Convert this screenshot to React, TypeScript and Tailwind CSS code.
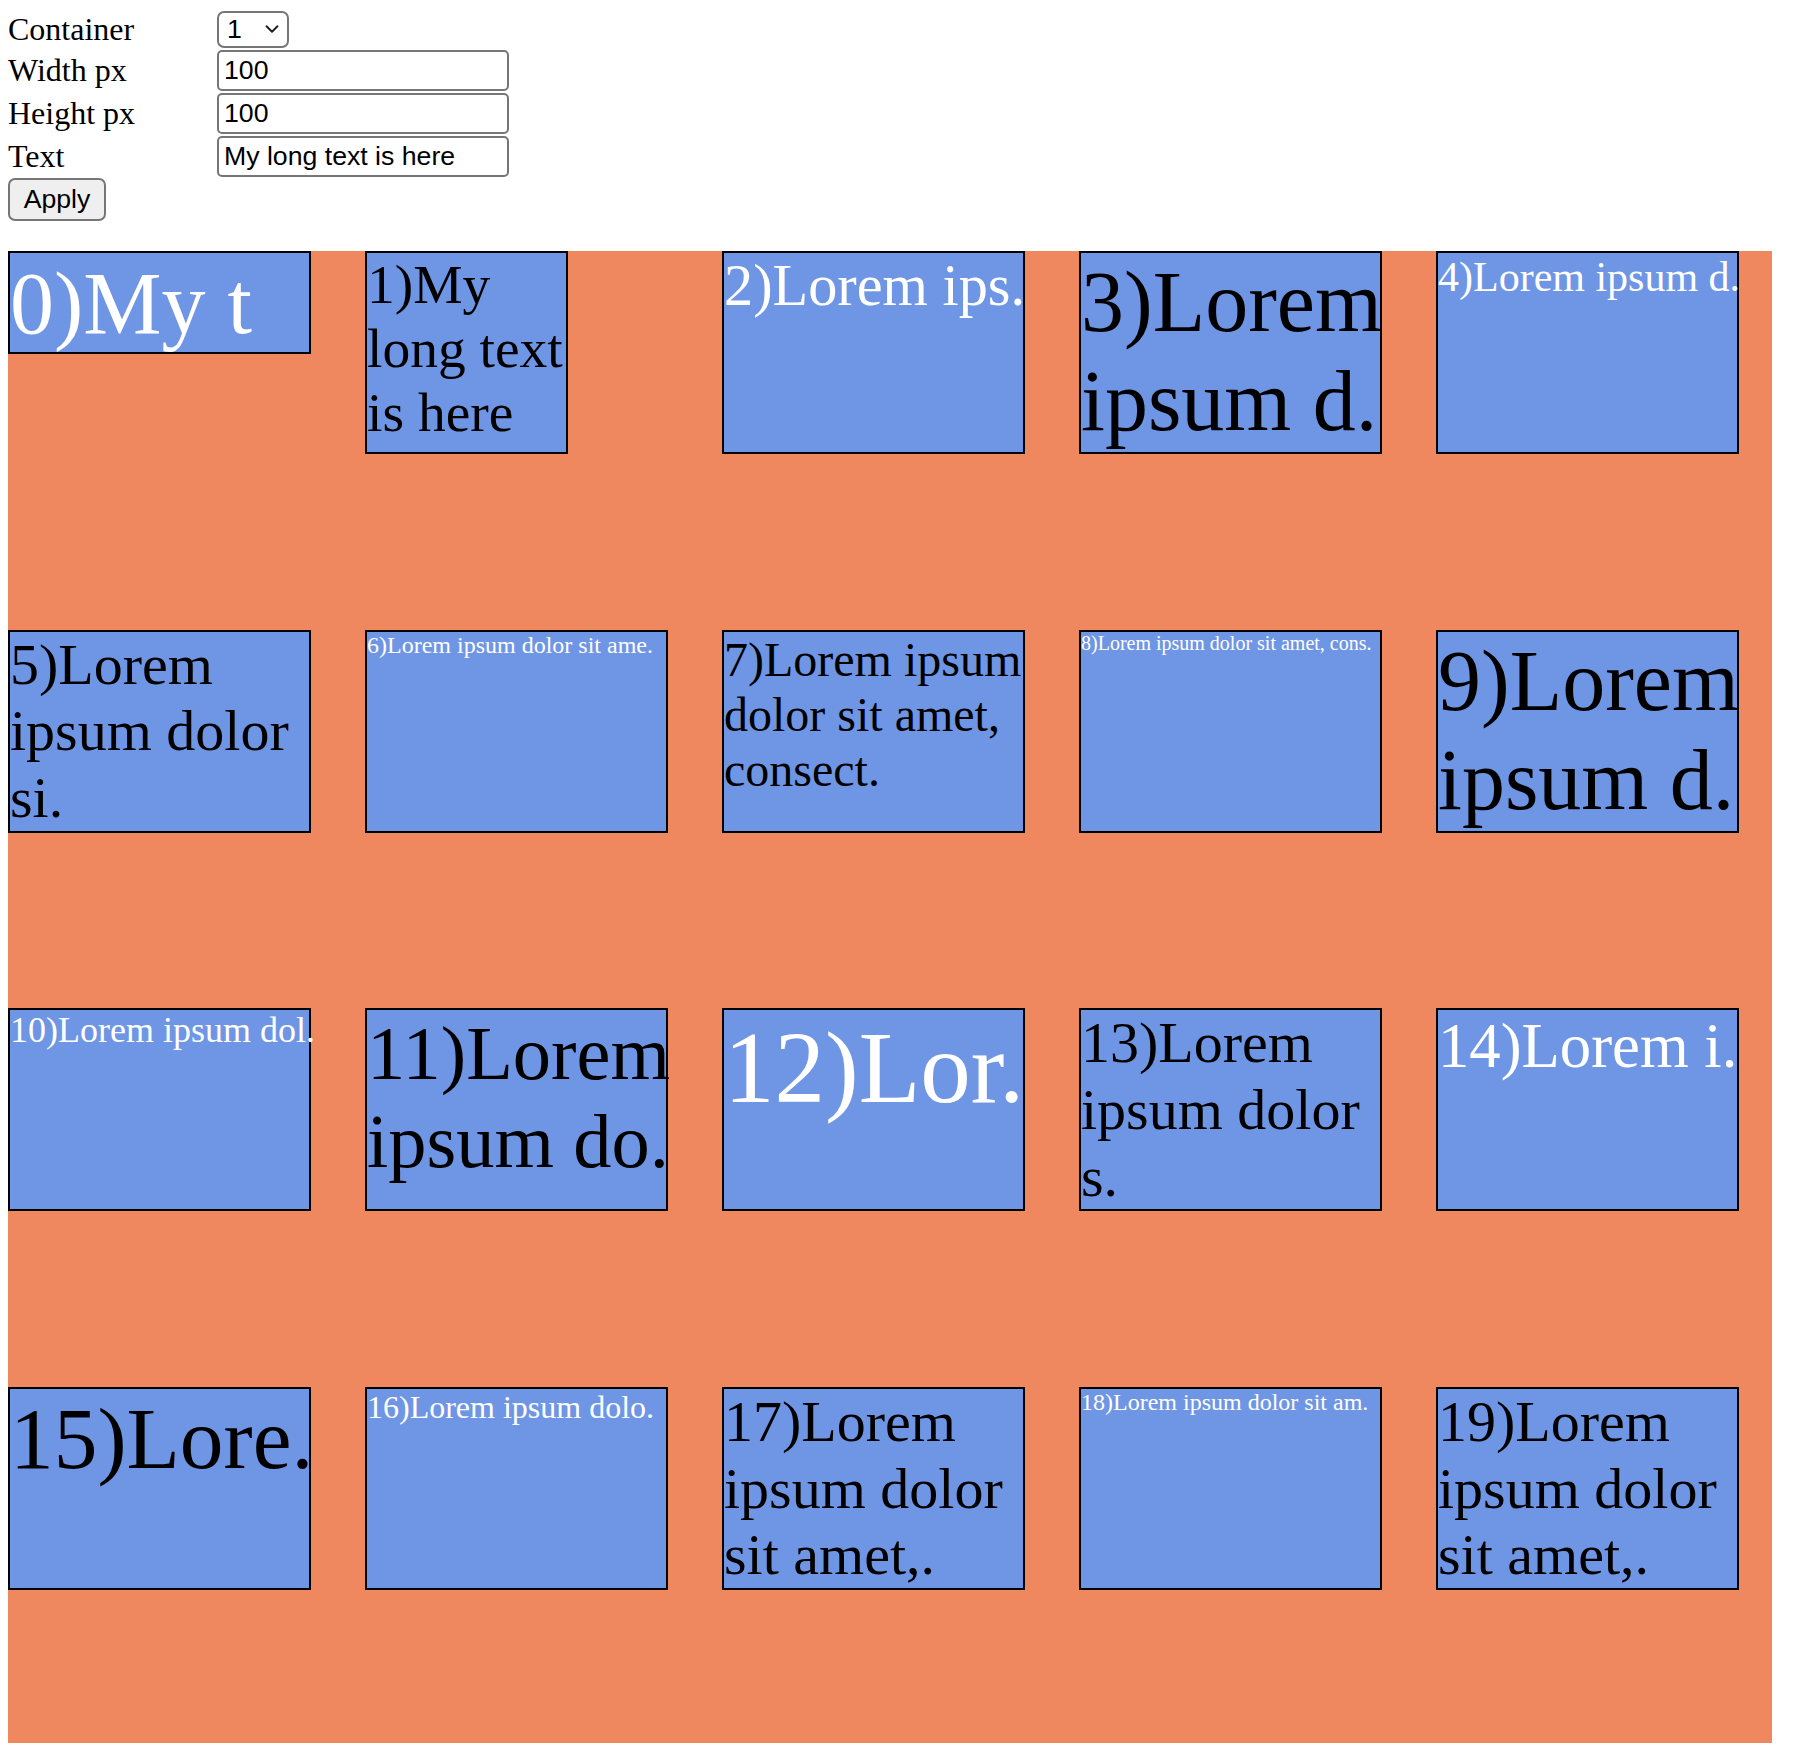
import { ChevronDown } from "lucide-react";

type Cell = {
  lines: string[];
  size: string;
  color: string;
  dims: string;
};

const cells: Cell[] = [
  { lines: ["0)My t"], size: "text-[88px]", color: "text-white", dims: "w-[303px] h-[103px]" },
  { lines: ["1)My", "long text", "is here"], size: "text-[55.5px]", color: "text-black", dims: "w-[203px] h-[203px]" },
  { lines: ["2)Lorem ips."], size: "text-[58.3px]", color: "text-white", dims: "w-[303px] h-[203px]" },
  { lines: ["3)Lorem", "ipsum d."], size: "text-[86px]", color: "text-black", dims: "w-[303px] h-[203px]" },
  { lines: ["4)Lorem ipsum d."], size: "text-[42px]", color: "text-white", dims: "w-[303px] h-[203px]" },
  { lines: ["5)Lorem", "ipsum dolor", "si."], size: "text-[58px]", color: "text-black", dims: "w-[303px] h-[203px]" },
  { lines: ["6)Lorem ipsum dolor sit ame."], size: "text-[24px]", color: "text-white", dims: "w-[303px] h-[203px]" },
  { lines: ["7)Lorem ipsum", "dolor sit amet,", "consect."], size: "text-[48px]", color: "text-black", dims: "w-[303px] h-[203px]" },
  { lines: ["8)Lorem ipsum dolor sit amet, cons."], size: "text-[20px]", color: "text-white", dims: "w-[303px] h-[203px]" },
  { lines: ["9)Lorem", "ipsum d."], size: "text-[86px]", color: "text-black", dims: "w-[303px] h-[203px]" },
  { lines: ["10)Lorem ipsum dol."], size: "text-[36px]", color: "text-white", dims: "w-[303px] h-[203px]" },
  { lines: ["11)Lorem", "ipsum do."], size: "text-[76.5px]", color: "text-black", dims: "w-[303px] h-[203px]" },
  { lines: ["12)Lor."], size: "text-[101px]", color: "text-white", dims: "w-[303px] h-[203px]" },
  { lines: ["13)Lorem", "ipsum dolor", "s."], size: "text-[58px]", color: "text-black", dims: "w-[303px] h-[203px]" },
  { lines: ["14)Lorem i."], size: "text-[62.7px]", color: "text-white", dims: "w-[303px] h-[203px]" },
  { lines: ["15)Lore."], size: "text-[87.4px]", color: "text-black", dims: "w-[303px] h-[203px]" },
  { lines: ["16)Lorem ipsum dolo."], size: "text-[32px]", color: "text-white", dims: "w-[303px] h-[203px]" },
  { lines: ["17)Lorem", "ipsum dolor", "sit amet,."], size: "text-[58px]", color: "text-black", dims: "w-[303px] h-[203px]" },
  { lines: ["18)Lorem ipsum dolor sit am."], size: "text-[24px]", color: "text-white", dims: "w-[303px] h-[203px]" },
  { lines: ["19)Lorem", "ipsum dolor", "sit amet,."], size: "text-[58px]", color: "text-black", dims: "w-[303px] h-[203px]" },
];

const label = "font-['Liberation_Serif',serif] text-[32px] leading-[1.15] text-black";
const field =
  "h-[41px] w-[292px] rounded-[5px] border-2 border-[#767676] bg-white px-[5px] font-['Liberation_Sans',Arial,sans-serif] text-[26.67px] text-black outline-none";

export default function App() {
  return (
    <div className="min-h-[1756px] bg-white pl-[8px] pt-[11px]">
      {/* settings form */}
      <div className="grid grid-cols-[209px_292px] items-center gap-y-[2px]">
        <span className={label}>Container</span>
        <div className="relative h-[37px] w-[72px]">
          <select
            defaultValue="1"
            className="h-full w-full appearance-none rounded-[7px] border-2 border-[#767676] bg-white pl-[8px] font-['Liberation_Sans',Arial,sans-serif] text-[26.67px] leading-none text-black outline-none"
          >
            <option value="1">1</option>
            <option value="2">2</option>
          </select>
          <ChevronDown
            size={22}
            strokeWidth={2}
            className="pointer-events-none absolute right-[6px] top-[7px] text-[#1a1a1a]"
          />
        </div>

        <span className={label}>Width px</span>
        <input className={field} defaultValue="100" />

        <span className={label}>Height px</span>
        <input className={field} defaultValue="100" />

        <span className={label}>Text</span>
        <input className={field} defaultValue="My long text is here" />
      </div>

      <button className="mt-[1px] h-[43px] w-[98px] rounded-[7px] border-2 border-[#767676] bg-[#efefef] font-['Liberation_Sans',Arial,sans-serif] text-[26.67px] leading-none text-black">
        Apply
      </button>

      {/* container 1 */}
      <div className="mt-[30px] grid h-[1492px] w-[1764px] auto-rows-[203px] grid-cols-[repeat(5,303px)] content-start items-start gap-x-[54px] gap-y-[175.7px] bg-[#ef885e]">
        {cells.map((c, i) => (
          <div
            key={i}
            className={`${c.dims} ${c.size} ${c.color} border-2 border-black bg-[#6f96e4] font-['Liberation_Serif',serif] leading-[1.149]`}
          >
            {c.lines.map((l, j) => (
              <div key={j} className="whitespace-nowrap">
                {l}
              </div>
            ))}
          </div>
        ))}
      </div>
    </div>
  );
}
